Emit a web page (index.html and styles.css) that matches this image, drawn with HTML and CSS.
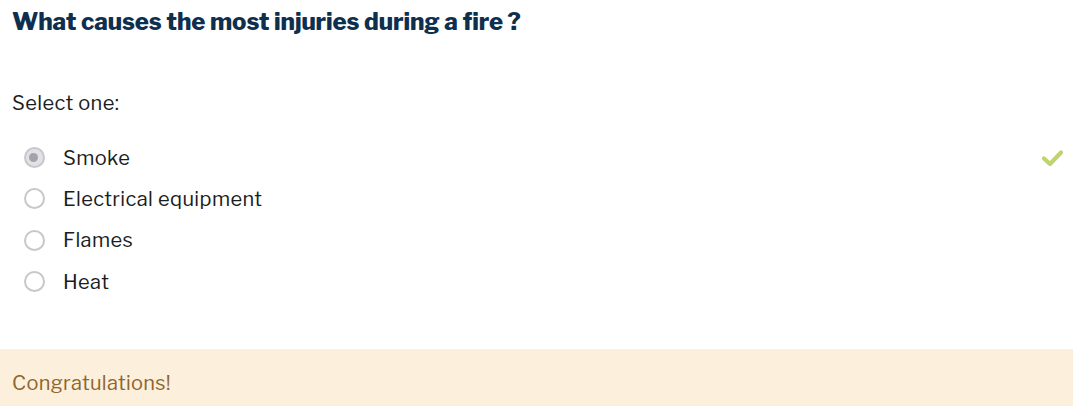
FILE: index.html
```html
<!DOCTYPE html>
<html>
<head>
<meta charset="utf-8">
<link rel="stylesheet" href="styles.css">
</head>
<body>
<div class="question">
  <h2 class="qtext">What causes the most injuries during a fire ?</h2>
  <div class="prompt">Select one:</div>
  <div class="answers">
    <label class="answer">
      <span class="radio checked"></span>
      <span class="label">Smoke</span>
      <svg class="tick" viewBox="0 0 20 16" width="21" height="16"><path d="M1.5 8.5 L7.5 14 L18.5 2.5" fill="none" stroke="#bfd46e" stroke-width="4.2" stroke-linejoin="round" stroke-linecap="round"/></svg>
    </label>
    <label class="answer">
      <span class="radio"></span>
      <span class="label">Electrical equipment</span>
    </label>
    <label class="answer">
      <span class="radio"></span>
      <span class="label">Flames</span>
    </label>
    <label class="answer">
      <span class="radio"></span>
      <span class="label">Heat</span>
    </label>
  </div>
</div>
<div class="feedback">Congratulations!</div>
</body>
</html>
```

FILE: styles.css
```css
html, body {
  margin: 0;
  padding: 0;
  background: #fff;
}
body {
  font-family: "Libre Franklin", "Inter", "Roboto", sans-serif;
  color: #1a1d21;
  overflow: hidden;
}
.question {
  padding: 0 10px 0 12px;
}
.qtext {
  margin: 0;
  padding-top: 7px;
  font-size: 24px;
  font-weight: 800;
  color: #0f2f4f;
  line-height: 30px;
  letter-spacing: -0.1px;
}
.prompt {
  margin-top: 54px;
  font-size: 20px;
  line-height: 24px;
  letter-spacing: 0.4px;
}
.answers {
  display: flex;
  flex-direction: column;
  margin-top: 22px;
}
.answer {
  display: flex;
  align-items: center;
  height: 41.3px;
  font-size: 20px;
  letter-spacing: 0.4px;
}
.radio {
  width: 21px;
  height: 21px;
  border: 2.5px solid #c8c8cc;
  border-radius: 50%;
  margin-left: 11.5px;
  margin-right: 18.5px;
  box-sizing: border-box;
  position: relative;
  flex: none;
}
.radio.checked {
  background: #e2e2e6;
}
.radio.checked::after {
  content: "";
  position: absolute;
  left: 3.5px;
  top: 3.5px;
  width: 9px;
  height: 9px;
  border-radius: 50%;
  background: #a3a3ab;
}
.label {
  flex: 1;
}
.feedback {
  margin-top: 47px;
  background: #fcefdc;
  color: #8e662e;
  font-size: 20px;
  letter-spacing: 0.3px;
  line-height: 24px;
  padding: 22px 12px 20px;
  height: 60px;
  box-sizing: border-box;
}
```
